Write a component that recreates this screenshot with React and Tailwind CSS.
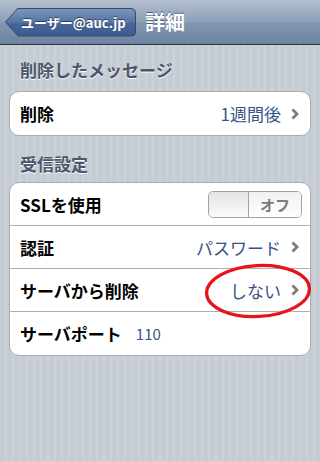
import React from "react";

const Chevron = () => (
  <svg width="8" height="12" viewBox="0 0 8 12" className="ml-[10px] shrink-0">
    <polyline points="1.5,1.5 6,6 1.5,10.5" fill="none" stroke="#7a7a7a" strokeWidth="2.8" />
  </svg>
);

const Row = ({ label, children, last }) => (
  <div
    className={
      "h-[43px] box-border flex items-center pl-[10px] pr-[11px] " +
      (last ? "" : "border-b border-[#abafb5]")
    }
  >
    <span className="text-[17px] font-bold text-black leading-none">{label}</span>
    {children}
  </div>
);

const SectionHeader = ({ children, pt }) => (
  <div
    className={
      "pl-[20px] leading-[22px] text-[17px] font-bold text-[#4c566c] [text-shadow:0_1px_0_#ffffff] " + pt
    }
  >
    {children}
  </div>
);

export default function App() {
  return (
    <div className="w-[320px] h-[461px] relative overflow-hidden font-['Noto_Sans_CJK_JP','Noto_Sans',sans-serif] bg-[repeating-linear-gradient(90deg,#c5ccd4_0px,#c5ccd4_5px,#cbd2d8_5px,#cbd2d8_7px)]">
      {/* nav bar */}
      <div className="h-[45px] box-border border-b border-[#2d3642] flex items-center pl-[5px] bg-[linear-gradient(#b2bfd0,#8ea0b7_50%,#8397b0_51%,#6d83a1)]">
        <div className="h-[29px] w-[131px] p-[1px] bg-[#3a4a63] rounded-r-[5px] [clip-path:polygon(13px_0,100%_0,100%_100%,13px_100%,0_50%)]">
          <div className="h-full w-full flex items-center pl-[15px] rounded-r-[4px] bg-[linear-gradient(#7b95bc,#5573a3_50%,#46659a_51%,#3c5b90)] [clip-path:polygon(12px_0,100%_0,100%_100%,12px_100%,0_50%)]">
            <span className="text-[13px] font-bold text-white leading-none [text-shadow:0_-1px_0_#2e3d57]">
              ユーザー@auc.jp
            </span>
          </div>
        </div>
        <span className="ml-[9px] text-[20px] font-bold text-white leading-none [text-shadow:0_-1px_0_#4a5a72]">
          詳細
        </span>
      </div>

      <SectionHeader pt="pt-[14px] pb-[10px]">削除したメッセージ</SectionHeader>
      <div className="mx-[9px] bg-white border border-[#a9adb3] rounded-[10px]">
        <Row label="削除" last>
          <span className="ml-auto text-[17px] text-[#385487] leading-none">1週間後</span>
          <Chevron />
        </Row>
      </div>

      <SectionHeader pt="pt-[17px] pb-[7px]">受信設定</SectionHeader>
      <div className="mx-[9px] bg-white border border-[#a9adb3] rounded-[10px]">
        <Row label="SSLを使用">
          <div className="ml-auto mr-[-3px] w-[94px] h-[27px] flex rounded-[5px] border border-[#a3a3a3] overflow-hidden">
            <div className="w-[40px] h-full border-r border-[#a3a3a3] bg-[linear-gradient(#e4e4e4,#fbfbfb)] rounded-l-[4px]" />
            <div className="flex-1 flex items-center justify-center bg-[linear-gradient(#f0f0f0,#ffffff)]">
              <span className="text-[15px] font-bold text-[#7b7b7b] leading-none">オフ</span>
            </div>
          </div>
        </Row>
        <Row label="認証">
          <span className="ml-auto text-[17px] text-[#385487] leading-none">パスワード</span>
          <Chevron />
        </Row>
        <Row label="サーバから削除">
          <span className="ml-auto text-[17px] text-[#385487] leading-none">しない</span>
          <Chevron />
        </Row>
        <Row label="サーバポート" last>
          <span className="ml-[14px] text-[15px] text-[#385487] leading-none">110</span>
        </Row>
      </div>

      {/* red annotation circle */}
      <svg
        className="absolute left-[203px] top-[262px]"
        width="110"
        height="58"
        viewBox="0 0 110 58"
      >
        <ellipse cx="55" cy="29" rx="51.5" ry="25.5" fill="none" stroke="#e8141c" strokeWidth="3.2" transform="rotate(-3 55 29)" />
      </svg>
    </div>
  );
}
